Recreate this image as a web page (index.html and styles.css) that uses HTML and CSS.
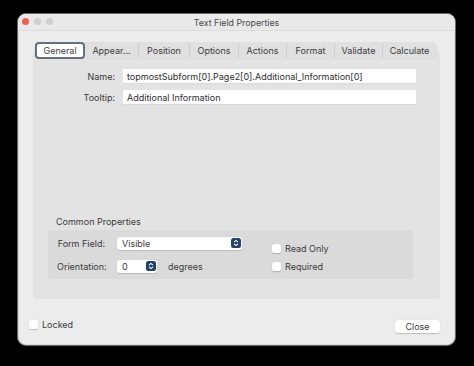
FILE: index.html
```html
<!DOCTYPE html>
<html lang="en">
<head>
    <meta charset="UTF-8">
    <title>Text Field Properties</title>
    <link rel="stylesheet" href="styles.css">
</head>
<body>

    <div class="window">
        <div class="titlebar">
            <div class="lights">
                <span class="light red"></span>
                <span class="light"></span>
                <span class="light"></span>
            </div>
            <div class="title">Text Field Properties</div>
        </div>

        <div class="content">
            <ul class="tabs">
                <li class="tab active">General</li>
                <li class="tab">Appear...</li>
                <li class="tab">Position</li>
                <li class="tab">Options</li>
                <li class="tab">Actions</li>
                <li class="tab">Format</li>
                <li class="tab">Validate</li>
                <li class="tab">Calculate</li>
            </ul>

            <div class="tabbox">
                <div class="row">
                    <label class="label">Name:</label>
                    <div class="field">topmostSubform[0].Page2[0].Additional_Information[0]</div>
                </div>
                <div class="row">
                    <label class="label">Tooltip:</label>
                    <div class="field">Additional Information</div>
                </div>

                <div class="common">
                    <h3>Common Properties</h3>
                    <div class="group">
                        <div class="group-left">
                            <div class="grow">
                                <span class="glabel">Form Field:</span>
                                <div class="popup wide">
                                    <span>Visible</span>
                                    <svg class="stepper" viewBox="0 0 10 10"><rect width="10" height="10" rx="2.5" fill="#24416b"/><path d="M3 4.2 5 2.4 7 4.2M3 5.8 5 7.6 7 5.8" fill="none" stroke="#fff" stroke-width="1.1"/></svg>
                                </div>
                            </div>
                            <div class="grow">
                                <span class="glabel">Orientation:</span>
                                <div class="popup narrow">
                                    <span>0</span>
                                    <svg class="stepper" viewBox="0 0 10 10"><rect width="10" height="10" rx="2.5" fill="#24416b"/><path d="M3 4.2 5 2.4 7 4.2M3 5.8 5 7.6 7 5.8" fill="none" stroke="#fff" stroke-width="1.1"/></svg>
                                </div>
                                <span class="unit">degrees</span>
                            </div>
                        </div>
                        <div class="group-right">
                            <div class="check"><span class="box"></span>Read Only</div>
                            <div class="check"><span class="box"></span>Required</div>
                        </div>
                    </div>
                </div>
            </div>

            <div class="footer">
                <div class="check"><span class="box"></span>Locked</div>
                <button class="btn">Close</button>
            </div>
        </div>
    </div>

</body>
</html>
```

FILE: styles.css
```css
* {
    padding: 0;
    margin: 0;
    box-sizing: border-box;
}

body {
    background-color: #000;
    font-family: 'Inter', 'Liberation Sans', sans-serif;
    font-size: 9px;
    color: #3a3a3a;
    padding: 13px 0 0 17px;
}

.window {
    width: 439px;
    height: 333px;
    background-color: #ececec;
    border: 1px solid #6a6a6a;
    border-radius: 9px;
    box-shadow: inset 0 0 0 1px #d8d8d8;
    display: flex;
    flex-direction: column;
    overflow: hidden;
}

.titlebar {
    height: 17px;
    position: relative;
    display: flex;
    align-items: center;
    justify-content: center;
    border-bottom: 1px solid #dcdcdc;
    background-color: #e9e9e9;
}

.lights {
    position: absolute;
    left: 4px;
    top: 4px;
    display: flex;
    gap: 5px;
}

.light {
    width: 7px;
    height: 7px;
    border-radius: 50%;
    background-color: #cfcfcf;
}

.light.red {
    background-color: #ec5f57;
}

.title {
    font-size: 8.8px;
    color: #4a4a4a;
}

.content {
    flex: 1;
    display: flex;
    flex-direction: column;
    padding: 12px 15px 0 15px;
}

.tabs {
    list-style: none;
    display: flex;
    height: 15px;
    margin: 0 4px 0 2px;
    background-color: #e0e0e0;
    border-radius: 4px;
    position: relative;
    z-index: 1;
    box-shadow: 0 0 0 0.5px #d4d4d4;
}

.tab {
    display: flex;
    align-items: center;
    justify-content: center;
    border-left: 1px solid #cdcdcd;
    color: #3c3c3c;
}

.tab:nth-child(2) { border-left: none; }

.tab:nth-child(1) { width: 50px; }
.tab:nth-child(2) { width: 53px; }
.tab:nth-child(3) { width: 51px; }
.tab:nth-child(4) { width: 49px; }
.tab:nth-child(5) { width: 48px; }
.tab:nth-child(6) { width: 48px; }
.tab:nth-child(7) { width: 48px; }
.tab:nth-child(8) { flex: 1; }

.tab.active {
    background-color: #fff;
    border: 2px solid #66707c;
    border-radius: 4px;
    margin: -1px 0;
}

.tabbox {
    flex: 0 0 248px;
    margin-top: -7px;
    background-color: #e3e3e3;
    border-radius: 4px;
    padding: 18px 24px 20px 0;
    display: flex;
    flex-direction: column;
    gap: 7px;
}

.row {
    display: flex;
    align-items: center;
    gap: 8px;
}

.label {
    width: 82px;
    text-align: right;
}

.field {
    flex: 1;
    height: 14px;
    background-color: #fff;
    padding: 0 4px;
    display: flex;
    align-items: center;
    color: #2e2e2e;
    box-shadow: 0 0.5px 0 #cfcfcf;
}

.common {
    margin-top: auto;
    margin-left: 15px;
    margin-right: 3px;
}

.common h3 {
    font-weight: normal;
    font-size: 9px;
    margin: 0 0 3px 8px;
}

.group {
    background-color: #dadada;
    border-radius: 4px;
    height: 49px;
    padding: 7px 8px 6px 9px;
    display: flex;
}

.group-left {
    display: flex;
    flex-direction: column;
    gap: 11px;
}

.grow {
    display: flex;
    align-items: center;
    height: 12px;
}

.glabel {
    width: 48px;
    text-align: right;
    margin-right: 12px;
    white-space: nowrap;
}

.popup {
    height: 13px;
    background-color: #fff;
    border-radius: 3px;
    display: flex;
    align-items: center;
    justify-content: space-between;
    padding: 0 1px 0 5px;
    box-shadow: 0 0.5px 1px rgba(0, 0, 0, 0.15);
}

.popup.wide {
    width: 125px;
}

.popup.narrow {
    width: 40px;
}

.stepper {
    width: 10px;
    height: 10px;
}

.unit {
    margin-left: 11px;
}

.group-right {
    margin-left: 30px;
    padding-top: 6px;
    display: flex;
    flex-direction: column;
    gap: 7px;
}

.check {
    display: flex;
    align-items: center;
    gap: 4px;
}

.box {
    width: 9px;
    height: 9px;
    background-color: #fff;
    border-radius: 2px;
    box-shadow: 0 0.5px 1px rgba(0, 0, 0, 0.2);
}

.footer {
    flex: 1;
    display: flex;
    align-items: flex-end;
    justify-content: space-between;
    margin: 0 0 0 -4px;
    padding-bottom: 12px;
}

.footer .check {
    margin-bottom: 3px;
}

.btn {
    width: 45px;
    height: 13px;
    background-color: #fff;
    border: none;
    border-radius: 3px;
    font-family: inherit;
    font-size: 9px;
    color: #3a3a3a;
    box-shadow: 0 0.5px 1px rgba(0, 0, 0, 0.2);
}
```
